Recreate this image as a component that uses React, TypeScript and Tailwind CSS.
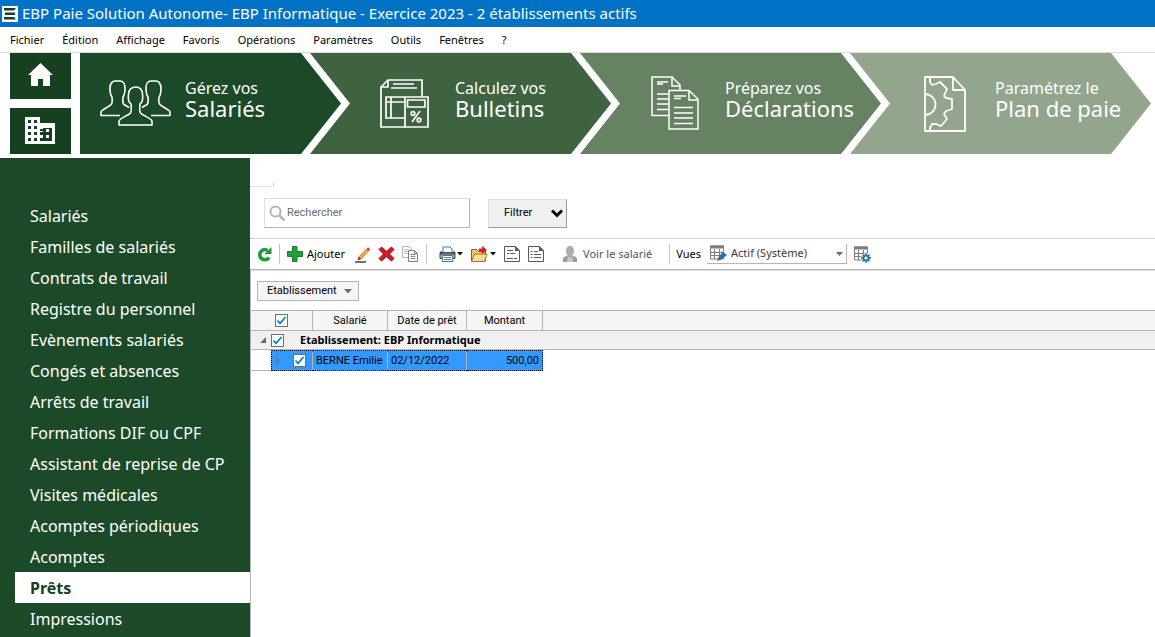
import type { ReactNode } from 'react';

const menus = ['Fichier', 'Édition', 'Affichage', 'Favoris', 'Opérations', 'Paramètres', 'Outils', 'Fenêtres', '?'];

const sideItems = [
  'Salariés',
  'Familles de salariés',
  'Contrats de travail',
  'Registre du personnel',
  'Evènements salariés',
  'Congés et absences',
  'Arrêts de travail',
  'Formations DIF ou CPF',
  'Assistant de reprise de CP',
  'Visites médicales',
  'Acomptes périodiques',
  'Acomptes',
  'Prêts',
  'Impressions',
];

function PeopleIcon() {
  return (
    <svg width="72" height="50" viewBox="0 0 72 50" fill="none" stroke="#fff" strokeWidth="1.6" strokeLinejoin="round">
      <path d="M20 36.500H1V33C1 31 9 28 11 25.500C13 24 12 20 12 18C10 16 10 12 10 9C10 4 13 2 15 2H20C23 2 25 5 25 9C25 12 25 15 23 18C23 21 22 24 24 25.500L29 28.500" />
      <path d="M51 36.500H70V33C70 31 62 28 60 25.500C58 24 59 20 59 18C61 16 61 12 61 9C61 4 58 2 56 2H51C48 2 46 5 46 9C46 12 46 15 48 18C48 21 49 24 47 25.500L42 28.500" />
      <path d="M19 46V42C20 39 29 36 30.500 34C32 32 31 27 31 25C28 23 28 19 28.500 15C29 10 32 8 36 8C40 8 42 10 42.500 15C43 19 43 23 40 25C40 27 39 32 40.500 34C42 36 51 39 52 42V46Z" />
    </svg>
  );
}

function PayslipIcon() {
  return (
    <svg width="49" height="50" viewBox="0 0 49 50" fill="none" stroke="#fff" strokeWidth="1.7">
      <path d="M42 18V1H8L1 8V48H25" />
      <path d="M1 8H8V1M13 5H34M11 9H37" />
      <path d="M25 18H6V39H25M6 23H25M11 18V39" />
      <path d="M25 18H48V48H25Z" />
      <path d="M27.500 21H45V28H27.500Z" />
      <path d="M40 32L32 43" />
      <circle cx="33" cy="34.500" r="1.800" />
      <circle cx="39" cy="41" r="1.800" />
    </svg>
  );
}

function DocumentsIcon() {
  return (
    <svg width="48" height="55" viewBox="0 0 48 55" fill="none" stroke="#fff" strokeWidth="1.5" className="ml-px">
      <path d="M18 39.500H1V1H21L29 9V14M21 1V10H29" />
      <path d="M6 6H17M6 8H12M6 18H18M6 23H18M6 28H18M6 33.500H18" />
      <path d="M18 14.500H38L47 23V53H18ZM38 14.500V24H47" />
      <path d="M23 20H35M23 22.500H30M23 31.500H42M23 37H42M23 42H42M23 47.500H42" />
    </svg>
  );
}

function PlanIcon() {
  return (
    <svg width="43" height="56" viewBox="0 0 43 56" fill="none" stroke="#fff" strokeWidth="1.8" strokeLinejoin="round" className="ml-1">
      <path d="M1 1H29L41 14V55H1ZM29 1V14H41" />
      <path d="M1 18A10.500 10.500 0 0 1 1 39" />
      <path d="M6 1V6L8 9L12 8L16 6L23 13L20 20L22 22L28 23V33L22 35L20 38L23 43L17 50L12 48L8 48L6 52V55" />
    </svg>
  );
}

function HomeIcon() {
  return (
    <svg width="25" height="26" viewBox="0 0 25 26" fill="#fff">
      <path d="M12.500 0L0 12H3V23H10V16H15V23H22V12H25Z" />
    </svg>
  );
}

function BuildingIcon() {
  return (
    <svg width="31" height="28" viewBox="0 0 31 28">
      <path fill="#fff" d="M0 0H15V6H30V27H0Z" />
      <path
        fill="#16401f"
        d="M3 3h3v3H3zM9 3h3v3H9zM3 9h3v3H3zM9 9h3v3H9zM3 15h3v3H3zM9 15h3v3H9zM3 21h3v3H3zM9 21h3v3H9zM15 12h3v-1h9v13H15v-3h3v-3h-3v-3h3v-1h-3z"
      />
      <path fill="#fff" d="M21 12h3v3h-3zM21 18h3v3h-3z" />
    </svg>
  );
}

const steps: { top: string; bottom: string; icon: ReactNode; look: string }[] = [
  {
    top: 'Gérez vos',
    bottom: 'Salariés',
    icon: <PeopleIcon />,
    look: 'basis-[261px] gap-2.5 pl-5 bg-[#1c4a28] [clip-path:polygon(0_0,calc(100%-40px)_0,100%_50%,calc(100%-40px)_100%,0_100%)]',
  },
  {
    top: 'Calculez vos',
    bottom: 'Bulletins',
    icon: <PayslipIcon />,
    look: 'basis-[301px] -ml-[31px] pl-[70px] bg-[#3f6241] [clip-path:polygon(0_0,calc(100%-40px)_0,100%_50%,calc(100%-40px)_100%,0_100%,40px_50%)]',
  },
  {
    top: 'Préparez vos',
    bottom: 'Déclarations',
    icon: <DocumentsIcon />,
    look: 'basis-[301px] -ml-[31px] pl-[70px] bg-[#678163] [clip-path:polygon(0_0,calc(100%-40px)_0,100%_50%,calc(100%-40px)_100%,0_100%,40px_50%)]',
  },
  {
    top: 'Paramétrez le',
    bottom: 'Plan de paie',
    icon: <PlanIcon />,
    look: 'basis-[301px] -ml-[31px] pl-[70px] bg-[#93a58d] [clip-path:polygon(0_0,calc(100%-40px)_0,100%_50%,calc(100%-40px)_100%,0_100%,40px_50%)]',
  },
];

function Check({ label }: { label: string }) {
  return (
    <span className="relative block size-[13px]">
      <input
        type="checkbox"
        defaultChecked
        aria-label={label}
        className="peer block size-[13px] appearance-none border border-[#707070] bg-white"
      />
      <svg
        className="pointer-events-none absolute inset-0 hidden peer-checked:block"
        width="13"
        height="13"
        viewBox="0 0 13 13"
        fill="none"
        stroke="#0f7fd0"
        strokeWidth="1.8"
      >
        <path d="M2.500 6.500L5 9.300L10.500 3" />
      </svg>
    </span>
  );
}

function ToolButton({ label, children }: { label: string; children: ReactNode }) {
  return (
    <button type="button" aria-label={label} className="flex shrink-0 items-center">
      {children}
    </button>
  );
}

function Caret() {
  return (
    <svg width="6" height="4" viewBox="0 0 6 4" className="ml-px">
      <path d="M0 0H6L3 3.500Z" fill="#111" />
    </svg>
  );
}

function Separator() {
  return <span className="h-5 w-px shrink-0 bg-[#c4c4c4]" />;
}

function GridGlyph() {
  return (
    <>
      <path d="M.500 1H13.500V14H.500Z" fill="#fff" stroke="#7d7d7d" />
      <path d="M0 .500H14V3.500H0Z" fill="#7d7d7d" />
      <path d="M4.500 4V14M9.500 4V14M0 7.500H14M0 10.500H14" stroke="#7d7d7d" />
    </>
  );
}

function Toolbar() {
  return (
    <div className="flex h-8 items-center border-t border-b border-t-[#cfcfcf] border-b-[#b5b5b5] pl-[7px] text-[11px] shadow-[0_1px_0_#dedede]">
      <ToolButton label="Actualiser">
        <svg width="15" height="16" viewBox="0 0 15 16">
          <path d="M12 11.500A5 5 0 1 1 10.500 4.500" fill="none" stroke="#1c9a35" strokeWidth="3.600" />
          <path d="M14.500 1V8H7.500Z" fill="#1c9a35" />
        </svg>
      </ToolButton>
      <span className="ml-[7px] flex">
        <Separator />
      </span>
      <button type="button" className="ml-[7px] flex items-center gap-1">
        <svg width="16" height="16" viewBox="0 0 16 16">
          <path d="M5.500.500H10V5.500H15.500V10.500H10V15.500H5.500V10.500H.500V5.500H5.500Z" fill="#21a038" stroke="#148029" />
        </svg>
        Ajouter
      </button>
      <div className="ml-2.5 flex items-center gap-[7px]">
        <ToolButton label="Modifier">
          <svg width="16" height="17" viewBox="0 0 16 17">
            <path d="M0 16H11" stroke="#111" strokeWidth="1.200" />
            <path d="M3 14L4 10.500L11.500 3L13.600 5L6.500 12.700Z" fill="#f4a64a" stroke="#c96c22" strokeWidth=".6" />
            <path d="M2.500 14.300L3.800 10.800L6.200 13Z" fill="#5b4636" />
            <path d="M11.500 3L13 1.300L15.300 3.500L13.600 5Z" fill="#d8333a" />
          </svg>
        </ToolButton>
        <ToolButton label="Supprimer">
          <svg width="17" height="16" viewBox="0 0 17 16">
            <path d="M3.500 1L8.500 5.500L13.500 1L16 3.500L11.500 8L16 12.500L13.500 15L8.500 10.500L3.500 15L1 12.500L5.500 8L1 3.500Z" fill="#d31822" stroke="#a10c15" />
          </svg>
        </ToolButton>
        <ToolButton label="Dupliquer">
          <svg width="17" height="16" viewBox="0 0 17 16" fill="#fff">
            <path d="M.500.500H7L9.500 3V11.500H.500Z" stroke="#b5b5b5" />
            <path d="M2 3.500H6M2 5.500H7M2 7.500H7" stroke="#c4c4c4" />
            <path d="M6.500 4.500H12.500L15.500 7.500V15.500H6.500Z" stroke="#808080" />
            <path d="M8.500 8.500H13.500M8.500 10.500H13.500M8.500 12.500H13.500" stroke="#909090" />
            <path d="M12.500 4.500V7.500H15.500" fill="none" stroke="#808080" />
          </svg>
        </ToolButton>
        <Separator />
      </div>
      <div className="ml-3 flex items-center gap-2">
        <ToolButton label="Imprimer">
          <svg width="17" height="16" viewBox="0 0 17 16">
            <path d="M4 6V1H11L13 3V6" fill="#fff" stroke="#2e7fb8" />
            <path d="M1 6.500H16V12.500H1Z" fill="#a5a5a5" stroke="#4d4d4d" />
            <path d="M1 5.500H3V7.500H14V5.500H16V8.500H1Z" fill="#424242" />
            <path d="M4 9.500H13L14 15.500H3Z" fill="#fff" stroke="#2e7fb8" />
            <path d="M5 11.500H12M5 13.500H12" stroke="#777" />
          </svg>
          <Caret />
        </ToolButton>
        <ToolButton label="Exporter">
          <svg width="18" height="16" viewBox="0 0 18 16">
            <path d="M.500 15V3.500H6L7.500 5.500H14.500V15Z" fill="#edc56c" stroke="#84612a" />
            <path d="M3.500 8H16L13.500 15.500H.500Z" fill="#f9dc92" stroke="#84612a" strokeWidth=".8" />
            <path d="M8 2.500H11V0L16 4L11 8V5.500H8Z" fill="#d4202a" />
          </svg>
          <Caret />
        </ToolButton>
        <ToolButton label="Aperçu">
          <svg width="16" height="16" viewBox="0 0 16 16" fill="#fff" stroke="#5a5a5a">
            <path d="M.500.500H11.500L15.500 4.500V15.500H.500Z" />
            <path d="M11 0V5H16Z" fill="#5a5a5a" stroke="none" />
            <path d="M3 4.500H9M3 7.500H5M6 7.500H11M3 12.500H9M10 12.500H13" />
          </svg>
        </ToolButton>
        <ToolButton label="Liste">
          <svg width="16" height="16" viewBox="0 0 16 16" fill="#fff" stroke="#5a5a5a">
            <path d="M.500.500H11.500L15.500 4.500V15.500H.500Z" />
            <path d="M11 0V5H16Z" fill="#5a5a5a" stroke="none" />
            <path d="M2.500 5.500H4.500M6 5.500H10M2.500 8.500H4.500M6 8.500H13M2.500 11.500H4.500M6 11.500H13" />
          </svg>
        </ToolButton>
      </div>
      <button type="button" className="ml-[18px] flex items-center gap-[5px] text-[#555]">
        <svg width="16" height="16" viewBox="0 0 16 16">
          <path d="M1 16V13C1 11 3 10 6 10H10C13 10 15 11 15 13V16Z" fill="#9d9d9d" />
          <path d="M6 10L8 12L10 10L11 16H5Z" fill="#c9c9c9" />
          <path d="M8 0C11 0 12 2 12 5C12 8 10 11 8 11C6 11 4 8 4 5C4 2 5 0 8 0Z" fill="#adadad" />
        </svg>
        Voir le salarié
      </button>
      <span className="ml-[17px] flex">
        <Separator />
      </span>
      <label htmlFor="vue" className="ml-1.5">
        Vues
      </label>
      <div className="relative ml-1.5 flex h-5 w-[140px] items-center border-r border-b border-[#b5b5b5]">
        <svg width="18" height="17" viewBox="0 0 18 17" className="pointer-events-none absolute left-[3px]">
          <GridGlyph />
          <path d="M7 16L9 11L13 7L17 10L12 14Z" fill="#1f73ae" />
        </svg>
        <select id="vue" className="h-full w-full appearance-none bg-transparent pl-6 text-[11px] text-[#3a3a3a]">
          <option>Actif (Système)</option>
        </select>
        <svg width="7" height="4" viewBox="0 0 7 4" className="pointer-events-none absolute right-[3px]">
          <path d="M0 0H7L3.500 4Z" fill="#6b6b6b" />
        </svg>
      </div>
      <span className="ml-[7px] flex">
        <ToolButton label="Configurer les vues">
          <svg width="17" height="17" viewBox="0 0 17 17">
            <GridGlyph />
            <circle cx="12" cy="12" r="4.800" fill="#fff" />
            <circle cx="12" cy="12" r="2.600" fill="#fff" stroke="#1f73ae" strokeWidth="2" />
            <path d="M12 7V9M12 15V17M7 12H9M15 12H17M8.500 8.500L10 10M14 14L15.500 15.500M8.500 15.500L10 14M14 10L15.500 8.500" stroke="#1f73ae" strokeWidth="1.300" />
          </svg>
        </ToolButton>
      </span>
    </div>
  );
}

function LoanTable() {
  return (
    <table className="w-full table-fixed border-separate border-spacing-0 text-left text-[11px] leading-4 font-['Roboto',sans-serif]">
      <colgroup>
        <col className="w-[20px]" />
        <col className="w-[42px]" />
        <col className="w-[75px]" />
        <col className="w-[79px]" />
        <col className="w-[76px]" />
        <col />
      </colgroup>
      <thead>
        <tr className="h-[21px] bg-[#f5f5f5] text-center *:border-t *:border-b *:border-[#b5b5b5] *:p-0 *:font-normal">
          <th colSpan={2} className="border-r">
            <div className="flex justify-center">
              <Check label="Tout sélectionner" />
            </div>
          </th>
          <th className="border-r">Salarié</th>
          <th className="border-r">Date de prêt</th>
          <th className="border-r">Montant</th>
          <th />
        </tr>
      </thead>
      <tbody>
        <tr className="h-[19px] bg-[#f0f0f0]">
          <th colSpan={6} className="border-b border-[#b5b5b5] p-0">
            <div className="flex items-center">
              <svg width="6" height="6" viewBox="0 0 6 6" className="mr-[5px] ml-[9px]">
                <path d="M6 0V6H0Z" fill="#6b6b6b" />
              </svg>
              <Check label="Sélectionner le groupe" />
              <span className="ml-4 font-['Noto_Sans',sans-serif]">Etablissement: EBP Informatique</span>
            </div>
          </th>
        </tr>
        <tr className="h-[21px] *:p-0">
          <td className="border-b border-[#b5b5b5]" />
          <td className="border-y border-l border-dotted border-black bg-[#3399ff]">
            <div className="flex h-[18px] items-center justify-between border-r border-solid border-[#b5b5b5] pr-1.5 pl-1">
              <svg width="4" height="8" viewBox="0 0 4 8">
                <path d="M0 0L4 4L0 8Z" fill="#5d7a99" />
              </svg>
              <Check label="Sélectionner BERNE Emilie" />
            </div>
          </td>
          <td className="border-y border-dotted border-black bg-[#3399ff]">
            <div className="flex h-[18px] items-center border-r border-solid border-[#b5b5b5] pl-[3px] whitespace-nowrap">
              BERNE Emilie
            </div>
          </td>
          <td className="border-y border-dotted border-black bg-[#3399ff]">
            <div className="flex h-[18px] items-center border-r border-solid border-[#b5b5b5] pl-[3px]">02/12/2022</div>
          </td>
          <td className="border-y border-r border-dotted border-black bg-[#3399ff]">
            <div className="flex h-[18px] items-center justify-end pr-[3px]">500,00</div>
          </td>
          <td />
        </tr>
      </tbody>
    </table>
  );
}

export default function App() {
  return (
    <div className="flex min-h-screen flex-col bg-white font-['Noto_Sans',sans-serif] text-black">
      <header>
        <div className="flex h-[27px] items-center gap-1 bg-[#0072c6] pl-0.5 text-[15px] text-white">
          <svg width="16" height="16" viewBox="0 0 16 16">
            <path fill="#fff" d="M0 0H16V16H0Z" />
            <path fill="#1d3b2a" d="M2 2H14L12 4.500H2ZM3 6.500H13V9H3ZM2 11H12L14 13.500H2Z" />
          </svg>
          <h1 className="whitespace-nowrap">EBP Paie Solution Autonome- EBP Informatique - Exercice 2023 - 2 établissements actifs</h1>
        </div>
        <nav className="flex h-[26px] items-center gap-[18px] border-b border-[#dedede] pt-0.5 pl-2.5 text-[11px]">
          {menus.map((m) => (
            <button type="button" key={m}>
              {m}
            </button>
          ))}
        </nav>
        <div className="flex h-[105px] pr-1 pb-1 pl-2.5">
          <div className="flex w-[61px] shrink-0 flex-col justify-between">
            <button type="button" aria-label="Accueil" className="flex h-[46px] items-center justify-center bg-[#16401f]">
              <HomeIcon />
            </button>
            <button type="button" aria-label="Société" className="flex h-[46px] items-center justify-center bg-[#16401f]">
              <BuildingIcon />
            </button>
          </div>
          <nav className="ml-[9px] flex flex-1">
            {steps.map((s) => (
              <button type="button" key={s.bottom} className={`flex shrink-0 grow items-center text-left text-white ${s.look}`}>
                <span className="flex w-[75px] shrink-0">{s.icon}</span>
                <span className="flex flex-col pb-3 whitespace-nowrap">
                  <span className="text-[16px] leading-5">{s.top}</span>
                  <span className="text-[22px] leading-5">{s.bottom}</span>
                </span>
              </button>
            ))}
          </nav>
        </div>
      </header>
      <div className="flex flex-1">
        <aside className="w-[250px] shrink-0 bg-[#1c4a28] pt-[42px] pl-[15px]">
          <ul>
            {sideItems.map((item) => (
              <li key={item}>
                <a
                  href="#"
                  className={
                    item === 'Prêts'
                      ? 'flex h-[31px] items-center bg-white pl-[15px] text-[16px] font-bold text-[#16401f]'
                      : 'flex h-[31px] items-center pl-[15px] text-[16px] text-white'
                  }
                >
                  {item}
                </a>
              </li>
            ))}
          </ul>
        </aside>
        <main className="flex min-w-0 flex-1 flex-col">
          <div className="mt-6 h-[5px] w-6 border-r border-b border-[#dedede]" />
          <div className="mt-[11px] mb-[10px] flex items-center gap-[18px] pl-3.5 font-['Roboto',sans-serif] text-[11px]">
            <div className="flex h-[30px] w-[206px] items-center gap-px border border-t-[#dedede] border-r-[#b5b5b5] border-b-[#b5b5b5] border-l-[#dedede] pl-1">
              <svg width="17" height="17" viewBox="0 0 17 17" fill="none" stroke="#b5b5b5">
                <circle cx="6.500" cy="6.500" r="5" strokeWidth="2" />
                <path d="M10.500 10.500L15.500 15.500" strokeWidth="2.500" />
              </svg>
              <input
                type="text"
                aria-label="Rechercher"
                placeholder="Rechercher"
                className="min-w-0 flex-1 outline-none placeholder:text-[#6b6b6b]"
              />
            </div>
            <button
              type="button"
              className="flex h-[29px] w-[79px] items-center justify-between border border-t-[#dedede] border-r-[#9c9c9c] border-b-[#9c9c9c] border-l-[#dedede] bg-[#f0f0f0] pr-[3px] pl-[15px]"
            >
              Filtrer
              <svg width="12" height="9" viewBox="0 0 12 9" fill="none" stroke="#000" strokeWidth="3">
                <path d="M1 1.500L6 6.500L11 1.500" />
              </svg>
            </button>
          </div>
          <Toolbar />
          <div className="flex-1 border-l border-[#b5b5b5]">
            <div className="flex h-10 items-center pt-0.5 pl-1.5">
              <button
                type="button"
                className="flex h-5 w-[102px] items-center justify-between border border-[#b5b5b5] bg-[#f5f5f5] pr-1.5 pl-[9px] font-['Roboto',sans-serif] text-[11px]"
              >
                Etablissement
                <svg width="8" height="5" viewBox="0 0 8 5">
                  <path d="M0 0H8L4 4.500Z" fill="#6b6b6b" />
                </svg>
              </button>
            </div>
            <LoanTable />
          </div>
        </main>
      </div>
    </div>
  );
}
